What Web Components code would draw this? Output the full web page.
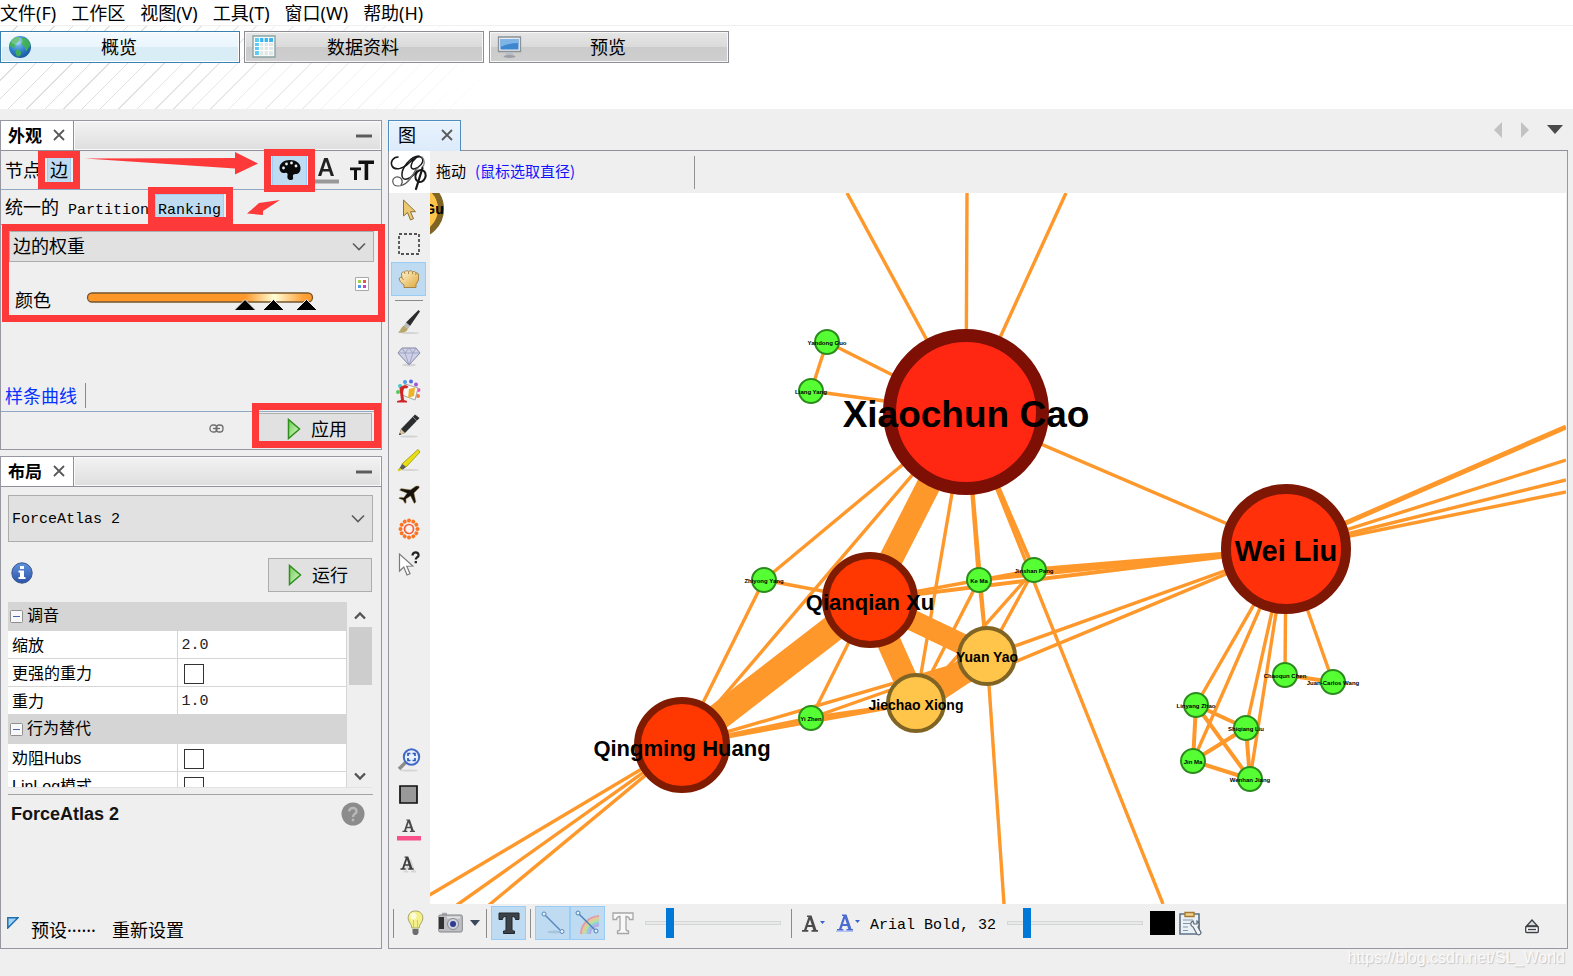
<!DOCTYPE html>
<html lang="zh-CN">
<head>
<meta charset="utf-8">
<title>Gephi</title>
<style>
html,body{margin:0;height:100%}
body{font-family:"Noto Sans","Noto Sans CJK SC",sans-serif;font-size:18px;line-height:24px;color:#000;background:#efefef}
</style>
</head>
<body>
<gephi-app></gephi-app>
<script>
const RESET = `*{box-sizing:border-box}
button{font:inherit;color:inherit;background:none;border:0;padding:0;margin:0;line-height:inherit;white-space:nowrap}
svg{display:block;flex:none}`;
function define(name, css, html, setup) {
  const t = document.createElement('template');
  t.innerHTML = `<style>${RESET}${css}</style>${html}`;
  customElements.define(name, class extends HTMLElement {
    constructor() {
      super();
      this.attachShadow({mode: 'open'}).append(t.content.cloneNode(true));
    }
    connectedCallback() { if (setup) setup(this, this.shadowRoot); }
  });
}

/* ---------- small controls ---------- */
define('tool-button', `
:host{display:flex;flex:0 0 35px;width:35px;height:34px}
button{flex:1;display:flex;align-items:center;justify-content:center;border:1px solid transparent}
:host([pressed]) button{background:#bfdbf2;border-color:#99ccf7}
`, `<button type="button"><slot></slot></button>`, (el, root) => {
  root.querySelector('button').setAttribute('aria-label', el.getAttribute('label') || '');
});

define('drop-down', `
:host{display:grid;height:31px;font-family:"Liberation Mono","Noto Sans CJK SC",monospace}
select,svg{grid-area:1/1}
select{appearance:none;width:100%;height:100%;border:1px solid #adadad;border-radius:0;background:#e1e1e1;color:#000;font:inherit;padding:3px 30px 0 3px;margin:0}
svg{justify-self:end;align-self:center;margin-right:8px;pointer-events:none}
`, `<select><option></option></select><svg width="14" height="9" viewBox="0 0 14 9"><path d="M1 1.500 7 7.500 13 1.500" fill="none" stroke="#5c5c5c" stroke-width="1.600"/></svg>`,
(el, root) => {
  root.querySelector('option').textContent = el.getAttribute('value');
  root.querySelector('select').setAttribute('aria-label', el.getAttribute('label'));
});

define('value-slider', `
:host{display:block;width:136px;height:34px}
input{appearance:none;-webkit-appearance:none;width:136px;height:34px;margin:0;background:none;display:block}
input::-webkit-slider-runnable-track{height:4px;background:#e7eaea;border:1px solid #d6d6d6}
input::-webkit-slider-thumb{-webkit-appearance:none;width:8px;height:30px;margin-top:-14px;background:#0078d7;border:0;border-radius:0}
`, `<input type="range" min="0" max="100">`, (el, root) => {
  const i = root.querySelector('input');
  i.value = el.getAttribute('value');
  i.setAttribute('aria-label', el.getAttribute('label'));
});

define('run-button', `
:host{display:flex;width:104px;height:34px}
button{flex:1;display:flex;align-items:center;justify-content:center;gap:10px;border:1px solid #adadad;background:#e1e1e1;padding-left:var(--lead,0)}
:host(:not([wide])) button{padding-right:4px}
`, `<button type="button"><svg width="14" height="22" viewBox="0 0 14 22"><defs><linearGradient id="g" x2="1" y2="1"><stop offset="0" stop-color="#6fce55"/><stop offset="1" stop-color="#dff8cf"/></linearGradient></defs><path d="M1.500 1.500v19L12.500 11z" fill="url(#g)" stroke="#2f8f1c" stroke-width="1.500"/></svg><slot></slot></button>`);

/* ---------- menu and perspective banner ---------- */
define('menu-bar', `
:host{display:block;background:#fff;border-bottom:1px solid #f0f0f0}
nav{display:flex;gap:15px;height:25px}
button{height:25px}
`, `<nav><button>文件(F)</button><button>工作区</button><button>视图(V)</button><button>工具(T)</button><button>窗口(W)</button><button>帮助(H)</button></nav>`);

define('perspective-tab', `
:host{display:flex;flex:0 0 240px;height:32px}
button{flex:1;display:grid;grid-template-columns:24px 1fr 26px;align-items:center;padding:0 7px;border:1px solid #8e8f95;box-shadow:inset 0 0 0 1px #f7f7f7;background:linear-gradient(#e6e6e6,#dadada 50%,#cbcbcb 51%,#cfcfcf)}
:host([selected]) button{border-color:#3c7fb1;box-shadow:inset 0 0 0 1px #fff;background:linear-gradient(#f3faff,#eaf5fd 50%,#d9edf7 51%,#d9edf7)}
`, `<button type="button"><slot name="icon"></slot><span><slot></slot></span></button>`);

define('perspective-banner', `
:host{display:block;position:relative;background:#fff;height:83px;padding-top:5px}
.hatch{position:absolute;inset:0;background:repeating-linear-gradient(135deg,transparent 0 12px,#dedede 12px 13px);-webkit-mask-image:linear-gradient(90deg,#000,#000 100px,transparent 500px);mask-image:linear-gradient(90deg,#000,#000 100px,transparent 500px)}
.row{position:relative;display:flex;gap:5px}
perspective-tab:first-child{margin-right:-1px}
`, `<div class="hatch"></div><div class="row">
<perspective-tab selected><svg slot="icon" width="24" height="24" viewBox="0 0 24 24"><defs><radialGradient id="e" cx=".4" cy=".3" r=".7"><stop offset="0" stop-color="#8cc8f4"/><stop offset=".6" stop-color="#2f7fca"/><stop offset="1" stop-color="#1c5aa0"/></radialGradient></defs><circle cx="12" cy="12" r="11" fill="url(#e)"/><path d="M3 6c2-3 5-4.500 8-4 0 2 1 3-1 5s-3 2-3 4-2 2-4 1-2-3 0-6zM14 3c4-1 8 3 8.500 7-1 3-3 3-4 6-2-1-1-4-3-5s-3-4-1.500-8zM8 15c3-1 6 1 5 4s-3 3-4 2-2-4-1-6z" fill="#43b649" opacity=".85"/><ellipse cx="9" cy="6" rx="6" ry="4" fill="#fff" opacity=".22"/></svg>概览</perspective-tab>
<perspective-tab><svg slot="icon" width="24" height="24" viewBox="0 0 24 24"><path d="M1 1h22v21H1z" fill="#f3f8f8" stroke="#8ca3a3" stroke-width="1.400"/><path d="M3 3h18v4H3z" fill="#35b6f1"/><path d="M3 3h4v17H3z" fill="#5ecaf6"/><path d="M8 8h13v12H8z" fill="#dfe7e7"/><path d="M3 7.500h18M3 11.500h18M3 15.500h18M7.500 3v17M12 3v17M16.500 3v17" stroke="#fff" stroke-width="1.200"/></svg>数据资料</perspective-tab>
<perspective-tab><svg slot="icon" width="26" height="24" viewBox="0 0 26 24"><path d="M1.500 2h22v14.500h-22z" fill="#e9ecef" stroke="#8b9198" stroke-width="1.300"/><path d="M3.500 4h18v10.500h-18z" fill="#3d86d0"/><path d="M3.500 4h18v4c-6 0-12 1-18 4z" fill="#7fb4e6"/><path d="M10 17h5l2 4H8z" fill="#b9bec4"/><ellipse cx="12.500" cy="21.500" rx="6" ry="1.500" fill="#9ba0a6"/></svg>预览</perspective-tab></div>`);

/* ---------- docked panel with a title tab ---------- */
define('dock-panel', `
:host{display:flex;flex-direction:column;position:relative;border:1px solid #9697a0;background:#efefef}
header{display:flex;height:30px;flex:none;border-bottom:1px solid #8e8f99}
.tab{width:73px;background:#fff;display:flex;align-items:center;justify-content:space-between;padding:0 7px 2px;border-right:1px solid #8e8f99}
h2{margin:0;font:bold 17px/24px "Noto Sans CJK SC",sans-serif}
.rest{flex:1;display:flex;justify-content:flex-end;align-items:center;padding-right:9px;background:linear-gradient(#f3f3f3,#dedede);box-shadow:inset 0 0 0 1px #fafafa}
`, `<header><div class="tab"><h2></h2><button aria-label="关闭"><svg width="14" height="14" viewBox="0 0 14 14"><path d="M2 2 12 12M12 2 2 12" stroke="#5a5a5a" stroke-width="1.800"/></svg></button></div><div class="rest"><button aria-label="最小化"><svg width="16" height="4"><path d="M0 .500h16v3H0z" fill="#5c5c5c"/></svg></button></div></header><slot></slot>`,
(el, root) => { root.querySelector('h2').textContent = el.getAttribute('heading'); });

define('appearance-pane', `
:host{display:block}
dock-panel{height:330px}
.row{display:flex;align-items:center;border-bottom:1px solid #8fa9c4;flex:none}
.kind{height:39px;padding-left:1px}
.kind button,.mode button{height:26px;padding:0 3px}
.kind .on{margin-left:3px}
.on{background:#bfdbf2;box-shadow:inset 0 0 0 1px #a5cdf2}
.icons{margin-left:auto;display:flex;padding-right:2px;gap:1px}
.mode{height:35px;padding-left:1px}
.mode .mono{font-family:"Liberation Mono",monospace;font-size:15px;padding-top:5px;margin-left:3px}
.body{flex:1;padding:6px 7px 0 8px}
.color{display:flex;height:50px;padding:15px 5px 0 6px}
.color label{align-self:flex-end;height:24px;width:69px}
.color .bar{align-self:flex-end}
.pal{margin-left:auto;align-self:flex-start}
.spline{height:32px;padding-left:4px}
a{color:#0433ff;text-decoration:none}
.sep{width:1px;height:25px;background:#8a8a8a;margin-left:8px}
.foot{display:flex;height:37px;align-items:center;justify-content:flex-end;gap:34px;padding:0 9px 4px 0;flex:none}
.foot run-button{width:114px;height:31px;--lead:4px}
.marks{position:absolute;left:-1px;top:-1px;pointer-events:none;z-index:2}
`, `<dock-panel heading="外观">
<div class="row kind"><button>节点</button><button class="on">边</button>
<div class="icons">
<tool-button label="颜色" pressed><svg width="22" height="22" viewBox="0 0 22 22"><path d="M11 1C5 1 .500 4.500.500 9c0 4 3 5.500 5.500 5 2-.500 3 .500 2.500 2.500C8 19 9 21 12 21c2 0 2.500-1.500 2-3-.500-2 .500-3 2.500-3 3 0 5-2 5-6C21.500 4.500 17 1 11 1z" fill="#0a0a0a"/><g fill="#e8f2fb"><circle cx="4.500" cy="9" r="1.400"/><circle cx="7.500" cy="5" r="1.400"/><circle cx="12.500" cy="4" r="1.400"/><circle cx="17" cy="7" r="1.400"/></g></svg></tool-button>
<tool-button label="标签颜色"><svg width="26" height="27" viewBox="0 0 26 27"><path d="M5 19 11.200 1h3.600L21 19h-3.200l-1.500-4.500H9.700L8.200 19zM10.500 12h5L13 4.200z" fill="#222"/><path d="M0 22.500h26V26.500H0z" fill="#999"/></svg></tool-button>
<tool-button label="标签尺寸"><svg width="24" height="22" viewBox="0 0 24 22"><path d="M8.500 1.500H24v3.600h-5.800V21h-3.600V5.100H8.500zM0 8.500h11v2.800H7V21H4v-9.700H0z" fill="#111"/></svg></tool-button>
</div></div>
<div class="row mode"><button>统一的</button><button class="mono">Partition</button><button class="mono on">Ranking</button></div>
<div class="body"><drop-down label="排名" value="边的权重"></drop-down>
<div class="color"><label>颜色</label>
<svg class="bar" width="236" height="24" viewBox="84 288 236 24" role="slider" aria-label="颜色" aria-valuenow="70"><defs><linearGradient id="o"><stop offset="0" stop-color="#ff9829"/><stop offset=".7" stop-color="#ff9829"/><stop offset=".83" stop-color="#ffffd8"/><stop offset=".96" stop-color="#ffa038"/><stop offset="1" stop-color="#ff9829"/></linearGradient></defs><rect x="87.500" y="293" width="225" height="9" rx="4.500" fill="url(#o)" stroke="#75562f" stroke-width="1.300"/><g fill="#000" stroke="#efefef"><path d="M234 310.500 245 299.500 256 310.500zM262.500 310.500 273.500 299.500 284.500 310.500zM295.500 310.500 306.500 299.500 317.500 310.500z"/></g></svg>
<button class="pal" aria-label="调色板"><svg width="14" height="14" viewBox="0 0 14 14"><path d="M.500.500h13v13H.500z" fill="#fff" stroke="#a9a9a9"/><path d="M3 3h3v3H3z" fill="#a3cf4e"/><path d="M8 3h3v3H8z" fill="#ea5353"/><path d="M3 8h3v3H3z" fill="#4b97e6"/><path d="M8 8h3v3H8z" fill="#c341d5"/></svg></button></div></div>
<div class="row spline"><a href="#spline">样条曲线</a><span class="sep"></span></div>
<div class="foot"><svg width="15" height="9" viewBox="0 0 15 9"><g fill="none" stroke="#6e6e6e" stroke-width="1.300"><rect x="1" y="1" width="7" height="7" rx="3"/><rect x="7" y="1" width="7" height="7" rx="3"/><path d="M4 4.500h7"/></g></svg><run-button wide>应用</run-button></div>
<svg class="marks" width="386" height="330" viewBox="0 120 386 330"><g fill="none" stroke="#fd3a39" stroke-width="7"><path d="M41.500 154.500h35v31h-35zM267.500 152.500h44v36h-44zM151.500 190.500h78v30h-78zM5.500 227.500h376v91H5.500zM255.500 406.500h122v38h-122z"/></g><g fill="#fd3a39"><path d="M85 158.500 235 158V152L258 163.500 235 174.500V168.500L160 163.500z"/><path d="M280 200 259 203 247 213.500 263 215V211z"/></g></svg>
</dock-panel>`);

/* ---------- layout panel ---------- */
define('property-table', `
:host{display:grid;grid-template-columns:1fr 24px;gap:1px;height:186px;overflow:hidden;font-size:16px;line-height:24px;font-family:"Liberation Sans","Noto Sans CJK SC",sans-serif;border-bottom:1px solid #e2e2e2}
.clip{overflow:hidden;height:186px}
table{border-collapse:separate;border-spacing:0;width:100%;table-layout:fixed}
th,td{padding:2px 4px 0;height:28px;text-align:left;font-weight:400;background:#fff;border-right:1px solid #d5d5d5;border-bottom:1px solid #d5d5d5;white-space:nowrap}
th[colspan]{height:29px;background:#d5d5d5;padding:0 2px}
th[colspan] button{display:flex;align-items:center;gap:4px}
td{font:15px/24px "Liberation Mono",monospace;color:#222}
input{appearance:none;display:block;width:20px;height:20px;margin:0 2px;border:1px solid #333;background:#fff}
.bar{display:flex;flex-direction:column;align-items:center;height:186px;padding:9px 0 7px}
.thumb{width:23px;height:58px;background:#cdcdcd;margin-top:7px}
.bar svg:last-child{margin-top:auto}
`, `<div class="clip"><table>
<tr><th colspan="2"><button><svg width="13" height="13"><rect x=".500" y=".500" width="12" height="12" rx="1" fill="#f8f8f8" stroke="#8f8f8f"/><path d="M3 6.500h7" stroke="#4a64ad"/></svg>调音</button></th></tr>
<tr><th>缩放</th><td>2.0</td></tr>
<tr><th><label for="a">更强的重力</label></th><td><input id="a" type="checkbox"></td></tr>
<tr><th>重力</th><td>1.0</td></tr>
<tr><th colspan="2"><button><svg width="13" height="13"><rect x=".500" y=".500" width="12" height="12" rx="1" fill="#f8f8f8" stroke="#8f8f8f"/><path d="M3 6.500h7" stroke="#4a64ad"/></svg>行为替代</button></th></tr>
<tr><th><label for="b">劝阻Hubs</label></th><td><input id="b" type="checkbox"></td></tr>
<tr><th><label for="c">LinLog模式</label></th><td><input id="c" type="checkbox"></td></tr>
</table></div>
<div class="bar"><svg width="12" height="9" viewBox="0 0 12 9"><path d="M1 7.500 6 2.500 11 7.500" fill="none" stroke="#555" stroke-width="2.400"/></svg><div class="thumb"></div><svg width="12" height="9" viewBox="0 0 12 9"><path d="M1 1.500 6 6.500 11 1.500" fill="none" stroke="#555" stroke-width="2.400"/></svg></div>`);

define('layout-pane', `
:host{display:flex;flex-direction:column}
dock-panel{flex:1}
.algo{margin:8px 8px 0 7px;height:47px;font-size:15px}
.run{display:flex;align-items:center;justify-content:space-between;padding:16px 9px 10px 10px}
.info{padding-bottom:4px}
property-table{margin:0 9px 0 7px}
.desc{margin:6px 8px 0 7px;border-top:1px solid #a3a3a3;display:flex;justify-content:space-between;padding:7px 8px 0 3px}
h3{margin:0;font:bold 18px/24px "Liberation Sans",sans-serif;color:#141414}
.foot{margin-top:auto;display:flex;align-items:center;gap:12px;padding:0 0 5px 6px}
.foot button{height:26px}
.foot button:last-child{margin-left:4px}
`, `<dock-panel heading="布局">
<drop-down class="algo" label="布局" value="ForceAtlas 2"></drop-down>
<div class="run"><button class="info" aria-label="信息"><svg width="22" height="22" viewBox="0 0 22 22"><defs><linearGradient id="i" x2="0" y2="1"><stop offset="0" stop-color="#5f92de"/><stop offset="1" stop-color="#2d53a8"/></linearGradient></defs><circle cx="11" cy="11" r="10.200" fill="url(#i)" stroke="#3a558f"/><path d="M9 4h4v3H9zM7.500 8.500H13V15h1.500v2h-7v-2H9v-4.500H7.500z" fill="#fff"/></svg></button><run-button>运行</run-button></div>
<property-table></property-table>
<div class="desc"><h3>ForceAtlas 2</h3><button aria-label="帮助"><svg width="24" height="24" viewBox="0 0 24 24"><circle cx="12" cy="12" r="11.500" fill="#8c8c8c"/><path d="M8.200 9.500C8.200 4.500 16 5 15.500 9.500 15.200 12 12 12 12 15" fill="none" stroke="#b9b9b9" stroke-width="2.400"/><circle cx="12" cy="18" r="1.400" fill="#b9b9b9"/></svg></button></div>
<div class="foot"><svg width="12" height="12" viewBox="0 0 12 12" style="margin-bottom:14px"><path d="M.800.800H11L.800 11z" fill="#9fd2f5" stroke="#1f6fae" stroke-width="1.500"/></svg><button>预设······</button><button>重新设置</button></div>
</dock-panel>`);

/* ---------- graph canvas ---------- */
const NODES = {
  cao:[966,412,'Xiaochun Cao',37,15], qian:[870,600,'Qianqian Xu',22,10], yuan:[987,656,'Yuan Yao',14,6],
  jie:[916,703,'Jiechao Xiong',14,7], qing:[682,745,'Qingming Huang',22,11], wei:[1286,549,'Wei Liu',29,12],
  a:[827,342,'Yandong Guo'], b:[811,391,'Liang Yang'], c:[764,580,'Zhiyong Yang'], d:[979,580,'Ke Ma'],
  e:[1034,570,'Jinshan Pang'], f:[811,718,'Yi Zhen'], g:[1196,705,'Linyang Zhao'], h:[1246,728,'Shiqiang Liu'],
  i:[1193,761,'Jin Ma'], j:[1250,779,'Wenhan Jiang'], k:[1285,675,'Chaoqun Chen'], l:[1333,682,'Juan-Carlos Wang']
};
const STYLE = {
  cao:[83,13,'#ff2712','#7d0f05'], qian:[48,7,'#ff3700','#7f1b00'], qing:[48,7,'#ff3700','#7f1b00'],
  wei:[65,10,'#ff300a','#7f1705'], yuan:[30,4,'#ffc54a','#7f6424'], jie:[30,4,'#ffc54a','#7f6424'], small:[13,2,'#55ff33','#2c8a1d']
};
const EDGES = `cao-a cao-b a-b cao-wei cao-c cao-qing cao-qian:24 qian-qing:27 qian-yuan:21 qian-jie:24 jie-yuan:25
cao-jie cao-d:4 cao-yuan cao-e:4 d-yuan e-yuan e-jie d-jie e-wei:5 d-wei:4 qian-wei:4 qian-e yuan-wei jie-wei
qian-f f-qing:4 jie-f:4 jie-qing yuan-qing yuan-f c-qian c-qing wei-g wei-h wei-i wei-j wei-k wei-l k-l:4
g-h:4 g-i:4 g-j:4 h-i:4 h-j:4 i-j:4`.split(/\s+/);
const OUT = [['cao',847,193],['cao',967,193],['cao',1066,193],['cao',1163,904],['yuan',1004,904],
  ['qing',428,896],['qing',457,905],['qing',489,905],['wei',1566,427,5],['wei',1566,460],['wei',1566,480],['wei',1566,492]];
function drawGraph() {
  let s = '<g stroke="#ff982b" fill="none">';
  const line = (a, x, y, w) => `<line x1="${a[0]}" y1="${a[1]}" x2="${x}" y2="${y}" stroke-width="${w || 3.4}"/>`;
  for (const e of EDGES) {
    const [p, w] = e.split(':'), [u, v] = p.split('-');
    s += line(NODES[u], NODES[v][0], NODES[v][1], w);
  }
  for (const [u, x, y, w] of OUT) s += line(NODES[u], x, y, w);
  s += '</g>';
  let t = '';
  for (const k in NODES) {
    const [x, y, name, size, dy] = NODES[k], [r, w, f, b] = STYLE[k] || STYLE.small;
    s += `<circle cx="${x}" cy="${y}" r="${r - w / 2}" fill="${f}" stroke="${b}" stroke-width="${w}"/>`;
    t += `<text x="${x}" y="${y + (dy || 3)}" font-size="${size || 6}">${name}</text>`;
  }
  s += '<circle cx="414" cy="209" r="27" fill="#ffc54a" stroke="#7f6424" stroke-width="6"/>';
  t += '<text x="434" y="214" font-size="14">Gu</text>';
  return s + `<g text-anchor="middle" fill="#000">${t}</g>`;
}
define('graph-canvas', `
:host{display:block;background:#fff;min-width:0;min-height:0;position:relative;overflow:hidden}
svg{position:absolute;inset:0;width:100%;height:100%;font-family:"Liberation Sans",sans-serif;font-weight:700}
`, `<svg viewBox="430 193 1136 711" preserveAspectRatio="xMidYMid slice" role="img" aria-label="图">${drawGraph()}</svg>`);

/* ---------- tool strips ---------- */
const SERIF_A = 'M5 15 9.500 2H8V.500h4.500L17.500 15H19v1.800h-6.500V15h1.800l-1-3H8.500l-1 3h1.800v1.800H3V15zM9 10h3.800L11 4.500z';
const SLAB_T = 'M1 1h20v6.500h-3.500C17.300 5.500 16.500 4.500 14 4.500V17c0 1.500 1 2 2.500 2v2.500h-11V19C7 19 8 18.500 8 17V4.500C5.500 4.500 4.700 5.500 4.500 7.500H1z';
let petals = '';
for (let n = 0; n < 12; n++) petals += `<circle cx="11" cy="2.500" r="2" transform="rotate(${n * 30} 11 11)"/>`;
define('graph-tools', `
:host{display:flex;flex-direction:column;align-items:center;padding:0 2px 22px 0}
.group{display:flex;flex-direction:column;align-items:center}
.select{height:103px}
.edit{height:276px}
.group tool-button{flex:1}
.view{height:140px;margin-top:auto}
hr{width:28px;height:1px;border:0;background:#8b8b8b;margin:4px 0}
`, `<div class="group select">
<tool-button label="选择"><svg width="14" height="22" viewBox="0 0 14 22"><path d="M1.500 1v16l4-3.500 3 7.500 3-1.300-3-7h5z" fill="#edc873" stroke="#8d7139"/></svg></tool-button>
<tool-button label="矩形选择"><svg width="22" height="22" viewBox="0 0 22 22"><rect x="1" y="1" width="20" height="20" fill="none" stroke="#222" stroke-width="1.400" stroke-dasharray="3 2"/></svg></tool-button>
<tool-button label="拖动" pressed><svg width="22" height="20" viewBox="0 0 22 20"><defs><linearGradient id="h" x2="1" y2="1"><stop offset="0" stop-color="#fff6d8"/><stop offset="1" stop-color="#dfa93a"/></linearGradient></defs><path d="M6 18.500v-2.500L2.500 13 1.200 10C1 8.500 2.500 8 4 8.500L3.500 5C3.500 3.500 5 2.500 6.500 3 7.500 1.500 9.500 1.500 10.500 2.500 11.500 1.500 13.500 1.500 14.500 2.800 16 2 17.500 2.800 18 4c1.500-.300 2.500.500 2.500 2v5l-2.500 4.500v3z" fill="url(#h)" stroke="#a58446"/><path d="M6.500 3 7 5M10.500 2.500v2.500M14.500 2.800v2.400M18 4l-.300 2M4 8.500 5.500 11" fill="none" stroke="#a58446" stroke-width=".900"/></svg></tool-button></div>
<hr>
<div class="group edit">
<tool-button label="画笔"><svg width="24" height="26" viewBox="0 0 24 26"><ellipse cx="13" cy="24" rx="9" ry="1" fill="#d3d3d3"/><path d="M21.500 1 23 2.500 13 17 9 13.500z" fill="#292b2d"/><path d="m9 13.500 4 3.500-2 3-4-3.500z" fill="#b9babb"/><path d="m7 16.500 4 3.500c-2 4-6 4-10 3.500 3-2 2.500-5 6-7z" fill="#b7a76b"/></svg></tool-button>
<tool-button label="大小"><svg width="24" height="22" viewBox="0 0 24 22"><ellipse cx="12" cy="19" rx="7" ry="1.500" fill="#d4d4d4"/><path d="M5 2h14l4 5L12 19 1 7z" fill="#cdd0e6" stroke="#8386a3"/><path d="M1 7h22M5 2l3 5 4 12 4-12 3-5M8 7l4-5 4 5" fill="none" stroke="#9ca0bd" stroke-width=".900"/></svg></tool-button>
<tool-button label="填充"><svg width="25" height="25" viewBox="0 0 25 25"><g><circle cx="2" cy="13" r="2" fill="#52c85c"/><circle cx="4" cy="7" r="2" fill="#3fc9c9"/><circle cx="9" cy="3" r="2" fill="#4a9be8"/><circle cx="15" cy="2.500" r="2" fill="#5569e8"/><circle cx="20" cy="5.500" r="2" fill="#a353dc"/><circle cx="22.500" cy="11" r="2" fill="#e25bb5"/><circle cx="22" cy="17" r="2" fill="#ef7b3f"/></g><path d="m9 5 13 4-3 12L6 16z" fill="#f8f8f6" stroke="#a2a2a2"/><path d="m13 10 6-1.500-1 8.500-6 2z" fill="#eeb326"/><path d="M3.500 9c3-3 7-4 9-1l-2 1.500C8 8.500 7 10 7 13l1 8 3 1v1.500H1V22l4-1z" fill="#cf2525"/></svg></tool-button>
<tool-button label="铅笔"><svg width="24" height="25" viewBox="0 0 24 25"><ellipse cx="12" cy="23.500" rx="9" ry="1" fill="#d2d2d2"/><path d="M18 1.500 22.500 5 8 20l-6 2 2-6z" fill="#2b2d2f"/><path d="m4 16 4 4-6 2z" fill="#d9c59d"/><path d="m3 20 1.200 1.300L2 22z" fill="#111"/><path d="m16 4 4 4" stroke="#888"/></svg></tool-button>
<tool-button label="荧光笔"><svg width="24" height="24" viewBox="0 0 24 24"><ellipse cx="13" cy="22" rx="9" ry="1" fill="#d5d5d5"/><path d="M21 1.500 23 4 9 19l-4-3z" fill="#e6df16" stroke="#aea60d"/><path d="m5 16 4 3-3 2.500-4-.500z" fill="#5b5e5a"/><path d="m1 22.500 3-1.500" stroke="#d5cc1b" stroke-width="2"/></svg></tool-button>
<tool-button label="最短路径"><svg width="22" height="20" viewBox="0 0 22 20"><path d="M20.500 1c1 .500 1 1.500.300 2.300L16 8l2 9-1.800 1.500L12.500 11 8 14l.200 3.500L7 18.500 5 15 .800 13.500l1-1.200 4 .200L9 8.300 1.500 5.200 3 3.500l9.500 1.300L18 1z" fill="#16130f" stroke="#b99f62" stroke-width=".500"/></svg></tool-button>
<tool-button label="热图"><svg width="22" height="22" viewBox="0 0 22 22"><g fill="#ff7420">${petals}</g><circle cx="11" cy="11" r="4.500" fill="#fff0e8" stroke="#f0603a" stroke-width="1.700"/></svg></tool-button>
<tool-button label="编辑"><svg width="22" height="27" viewBox="0 0 22 27"><path d="M1.500 4v17l4.300-4 3.200 8 3-1.300-3.200-7.500 6-.200z" fill="#fff" stroke="#7b7b7b" stroke-width="1.200"/><path d="M14.500 5.500C14.500 1 21 1.500 20.500 5.500 20.200 7.500 17.800 7.500 17.800 9.500M17.800 11v2.200" fill="none" stroke="#222" stroke-width="2.300"/></svg></tool-button></div>
<div class="group view">
<tool-button label="居中"><svg width="24" height="24" viewBox="0 0 24 24"><ellipse cx="12" cy="22.500" rx="9" ry="1" fill="#d4d4d4"/><path d="m9 14-7 7" stroke="#8d8d8d" stroke-width="3.500"/><circle cx="14.500" cy="9" r="7.700" fill="#e9f2fc" stroke="#4169c8" stroke-width="2"/><path d="M11 8V5.500h2.500M15.500 5.500H18V8M18 10v2.500h-2.500M13.500 12.500H11V10" fill="none" stroke="#2f58bb" stroke-width="1.700"/></svg></tool-button>
<tool-button label="重置颜色"><svg width="19" height="19"><path d="M1 1h17v17H1z" fill="#999" stroke="#111" stroke-width="1.700"/></svg></tool-button>
<tool-button label="重置标签颜色"><svg width="24" height="22" viewBox="0 0 24 22"><g transform="scale(.78)"><path d="${SERIF_A}" transform="translate(4 0)" fill="#4a4a4a"/></g><path d="M0 17h24v4.500H0z" fill="#f8518a"/></svg></tool-button>
<tool-button label="重置标签大小"><svg width="22" height="18" viewBox="0 0 22 18"><g transform="translate(3 3) scale(.8)"><path d="${SERIF_A}" fill="#d6d6d6"/></g><g transform="translate(0 0) scale(.82)"><path d="${SERIF_A}" fill="#3d3d3d"/></g></svg></tool-button></div>`);

define('graph-options', `
:host{display:flex;align-items:center;height:44px;padding:0 18px 6px 4px;font:15px/24px "Liberation Mono",monospace}
i{flex:0 0 1px;height:29px;background:#8b8b8b;margin-right:4px}
tool-button + i{margin-left:4px}
value-slider + i{margin-left:10px}
.menu{width:14px;display:flex;justify-content:center}
.menu + i{margin-left:4px}
.edges{margin-left:5px}
.font{padding:6px 11px 0 4px}
.swatch{width:25px;height:24px;background:#000;margin:0 3px 0 7px}
.end{margin-left:auto;padding-top:6px}
`, `<i></i>
<tool-button label="背景颜色"><svg width="17" height="26" viewBox="0 0 17 26"><path d="M8.500 1C3 1 .800 5 1.200 9c.500 3 3.300 5 3.800 9h7c.500-4 3.300-6 3.800-9C16.200 5 14 1 8.500 1z" fill="#f4f18b" stroke="#a8a365"/><path d="M6.500 10v8M10.500 10v8" stroke="#cfc960"/><ellipse cx="6.500" cy="6" rx="3" ry="3.500" fill="#fff" opacity=".7"/><path d="M5.500 19h6v4l-1.500 2H7l-1.500-2z" fill="#6d6d6d"/></svg></tool-button>
<tool-button label="截图"><svg width="25" height="22" viewBox="0 0 25 22"><path d="M4 3V.800h5V3" fill="#aaa"/><rect x=".700" y="3" width="23.600" height="17" rx="1.500" fill="#bdbec1" stroke="#858589"/><path d="M1 5h5v12H1z" fill="#313131"/><path d="M9 4.500h13v2H9z" fill="#e3e3e5"/><circle cx="15" cy="12" r="5.500" fill="#d2d3de" stroke="#8a8a94"/><circle cx="15" cy="12" r="3" fill="#2f3c92"/></svg></tool-button>
<button class="menu" aria-label="截图选项"><svg width="10" height="6"><path d="M0 0h10L5 6z" fill="#39485c"/></svg></button><i></i>
<tool-button label="节点标签" pressed><svg width="22" height="23" viewBox="0 0 22 23"><path d="${SLAB_T}" fill="#3d4248" stroke="#23272b"/></svg></tool-button><i></i>
<tool-button label="显示边" pressed><svg width="24" height="24" viewBox="0 0 24 24"><ellipse cx="14" cy="21" rx="8" ry="1.500" fill="#a8c4dc"/><path d="M4 4 19 19" stroke="#5689bd" stroke-width="1.400"/><g fill="#e6f2fc" stroke="#5689bd"><circle cx="3" cy="3" r="2"/><circle cx="21" cy="20.500" r="2"/></g></svg></tool-button>
<tool-button label="边颜色" pressed><svg width="26" height="26" viewBox="0 0 26 26"><g fill="none" stroke-width="2.200" opacity=".75"><path d="M6 24C6 15 13 7 24 6" stroke="#f08a8a"/><path d="M8.200 24C8.200 16 15 9.200 24 8.200" stroke="#f2c572"/><path d="M10.400 24C10.400 17 16 11.500 24 10.400" stroke="#b9e07d"/><path d="M12.600 24C12.600 18 17 13.700 24 12.600" stroke="#7cc6dd"/><path d="M14.800 24C14.800 19 18 16 24 14.800" stroke="#b597dc"/></g><path d="M4 4 21 21" stroke="#4a80b8" stroke-width="1.400"/><g fill="#e6f2fc" stroke="#4a80b8"><circle cx="3" cy="3" r="2"/><circle cx="21" cy="21" r="2"/></g></svg></tool-button>
<tool-button label="边标签"><svg width="22" height="23" viewBox="0 0 22 23"><path d="${SLAB_T}" fill="#f8f8f8" stroke="#a6a6a6" stroke-width="1.300"/></svg></tool-button>
<value-slider class="edges" label="边粗细" value="16"></value-slider><i></i>
<tool-button label="标签大小模式"><svg width="24" height="19" viewBox="0 0 24 19"><g transform="translate(-3 1)"><path d="${SERIF_A}" fill="#4b4b4b"/></g><path d="M18 7h5l-2.500 3z" fill="#3a62cc"/></svg></tool-button>
<tool-button label="标签颜色模式"><svg width="25" height="20" viewBox="0 0 25 20"><g transform="translate(-2 1)"><path d="${SERIF_A}" fill="#4c6bd0"/></g><path d="M0 17.500h17v1.500H0z" fill="#b3c1f0"/><path d="M19 7h5l-2.500 3z" fill="#3a62cc"/></svg></tool-button>
<button class="font">Arial Bold, 32</button>
<value-slider label="字体大小" value="12"></value-slider>
<button class="swatch" aria-label="默认颜色"></button>
<button aria-label="属性"><svg width="26" height="25" viewBox="0 0 26 25"><path d="M2 3h19v20H2z" fill="#e9f0f6" stroke="#5d7185" stroke-width="1.600"/><path d="M7 1.500h9v4H7z" fill="#f3d089" stroke="#a37a33" stroke-width="1.400"/><path d="M5 9h10M5 12.500h7M5 16h5M5 19.500h5" stroke="#8397aa"/><path d="M15 10c-3 1-3 5 0 6l4 7c1 1.500 4 1 4-1.500L20 16c2-2 1-5-1-6v3h-3z" fill="#f2f5f7" stroke="#586878" stroke-width="1.200"/></svg></button>
<tool-button class="end" label="展开"><svg width="14" height="15" viewBox="0 0 14 15"><path d="M7 1 12.500 7h-11z" fill="#d8d8d8" stroke="#3c3f45" stroke-width="1.300"/><rect x=".700" y="7.500" width="12.600" height="6" rx="1" fill="#fff" stroke="#3c3f45" stroke-width="1.300"/><path d="M3 10.500h8" stroke="#3c3f45" stroke-width="1.400"/></svg></tool-button>`);

define('graph-pane', `
:host{display:flex;flex-direction:column;min-width:0}
header{display:flex;height:31px;flex:none}
.tab{width:73px;display:flex;align-items:center;justify-content:space-between;padding:0 6px 2px 9px;background:linear-gradient(#e9f3fe,#dceafa);border:1px solid #4f8cbf;border-bottom:0;box-shadow:inset 1px 1px 0 #f4f9ff}
.tab span{line-height:26px}
.rest{flex:1;display:flex;gap:17px;justify-content:flex-end;align-items:center;padding:0 5px 11px 0;border-bottom:1px solid #8e8f99}
.box{flex:1;display:grid;grid-template:42px 1fr 44px/41px 1fr;border:1px solid #9697a0;border-top:0;min-height:0}
.logo{background:#fff}
.status{display:flex;align-items:center;justify-content:space-between;font:15px/24px "Noto Sans CJK SC",sans-serif;padding-left:6px}
.status p{margin:0;padding-bottom:2px;display:flex;gap:9px;width:258px}
.status em{font-style:normal;color:#1414ff}
.status b{width:1px;height:33px;background:#929292;margin-right:auto}
graph-tools{grid-area:2/1}
graph-canvas{grid-area:2/2;margin-right:1px}
graph-options{grid-area:3/1/4/3}
`, `<header><div class="tab"><span>图</span><button aria-label="关闭"><svg width="14" height="14" viewBox="0 0 14 14"><path d="M2 2 12 12M12 2 2 12" stroke="#5a5a5a" stroke-width="1.800"/></svg></button></div>
<div class="rest"><button aria-label="向左"><svg width="10" height="16"><path d="M9 0v16L1 8z" fill="#c2c2c2"/></svg></button><button aria-label="向右"><svg width="10" height="16"><path d="M1 0v16l8-8z" fill="#c2c2c2"/></svg></button><button aria-label="窗口列表"><svg width="16" height="9"><path d="M0 0h16L8 9z" fill="#4a4a4a"/></svg></button></div></header>
<div class="box"><div class="logo"><svg width="41" height="42" viewBox="0 0 41 42"><g fill="none" stroke="#171717" stroke-width="1.500" stroke-linecap="round"><path d="M9 6C4 6 1 11 3 15c3 5 11 3 17-3 5-5 10-8 13-5 3 4-3 10-8 11-5 0-3-7 2-11"/><path d="M30 5C22 5 12 17 13 25c1 6 9 3 15-5"/><path d="M27 18C22 29 16 35 9 35c-6 0-7-7-2-9 5-1 8 4 5 8" stroke-width="1.200" stroke="#555"/><path d="M29 17 18 31M33 6c3 3 3 8 0 10" stroke="#777" stroke-width="1.200"/><ellipse cx="31.500" cy="25" rx="5" ry="6" transform="rotate(22 31.500 25)" stroke-width="2"/><path d="M33.500 17 27 38" stroke-width="2.200"/></g></svg></div>
<div class="status"><p><span>拖动</span><em>(鼠标选取直径)</em></p><b></b></div>
<graph-tools></graph-tools><graph-canvas></graph-canvas><graph-options></graph-options></div>`);

define('gephi-app', `
:host{display:flex;flex-direction:column;min-height:100vh}
main{flex:1;display:grid;grid-template-columns:382px minmax(0,1fr);gap:6px;padding:11px 5px 0 0}
aside{display:flex;flex-direction:column;gap:6px}
layout-pane{flex:1}
footer{height:27px;text-align:right;padding-right:8px;font:16px/18px "Liberation Sans",sans-serif;color:#fafafa;text-shadow:1px 1px 1px #c4c4c4}
`, `<menu-bar></menu-bar><perspective-banner></perspective-banner>
<main><aside><appearance-pane></appearance-pane><layout-pane></layout-pane></aside><graph-pane></graph-pane></main>
<footer>https://blog.csdn.net/SL_World</footer>`);
</script>
</body>
</html>
